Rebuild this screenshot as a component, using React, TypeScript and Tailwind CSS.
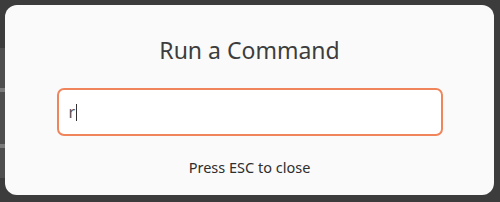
import React from "react";

export default function App() {
  return (
    <div
      className="flex h-[202px] w-[500px] overflow-hidden bg-[#3c3c3c]"
      style={{ fontFamily: '"Noto Sans", "Open Sans", sans-serif' }}
    >
      <div className="flex w-[5px] shrink-0 flex-col pt-[48px]">
        <div className="h-[40px] bg-[#4e4e4e]" />
        <div className="h-[4px] bg-[#7a7a7a]" />
        <div className="h-[52px] bg-[#4e4e4e]" />
        <div className="h-[4px] bg-[#7a7a7a]" />
        <div className="h-[30px] bg-[#4e4e4e]" />
      </div>
      <div className="mt-[5px] flex h-[190px] w-[489px] shrink-0 flex-col items-center rounded-[12px] bg-[#fafafa]">
        <h1 className="mt-[29px] text-[23px] leading-[32px] text-[#3d3d3d]">Run a Command</h1>
        <div className="mt-[22px] flex h-[48px] w-[386px] items-center rounded-[7px] border-2 border-[#f0855c] bg-white pl-[10px]">
          <span className="text-[16px] leading-none text-[#555555]">r</span>
          <span className="ml-[1px] h-[17px] w-[1px] bg-[#333333]" />
        </div>
        <p className="mt-[21px] text-[14.5px] leading-[20px] text-[#2e2e2e]">Press ESC to close</p>
      </div>
    </div>
  );
}
